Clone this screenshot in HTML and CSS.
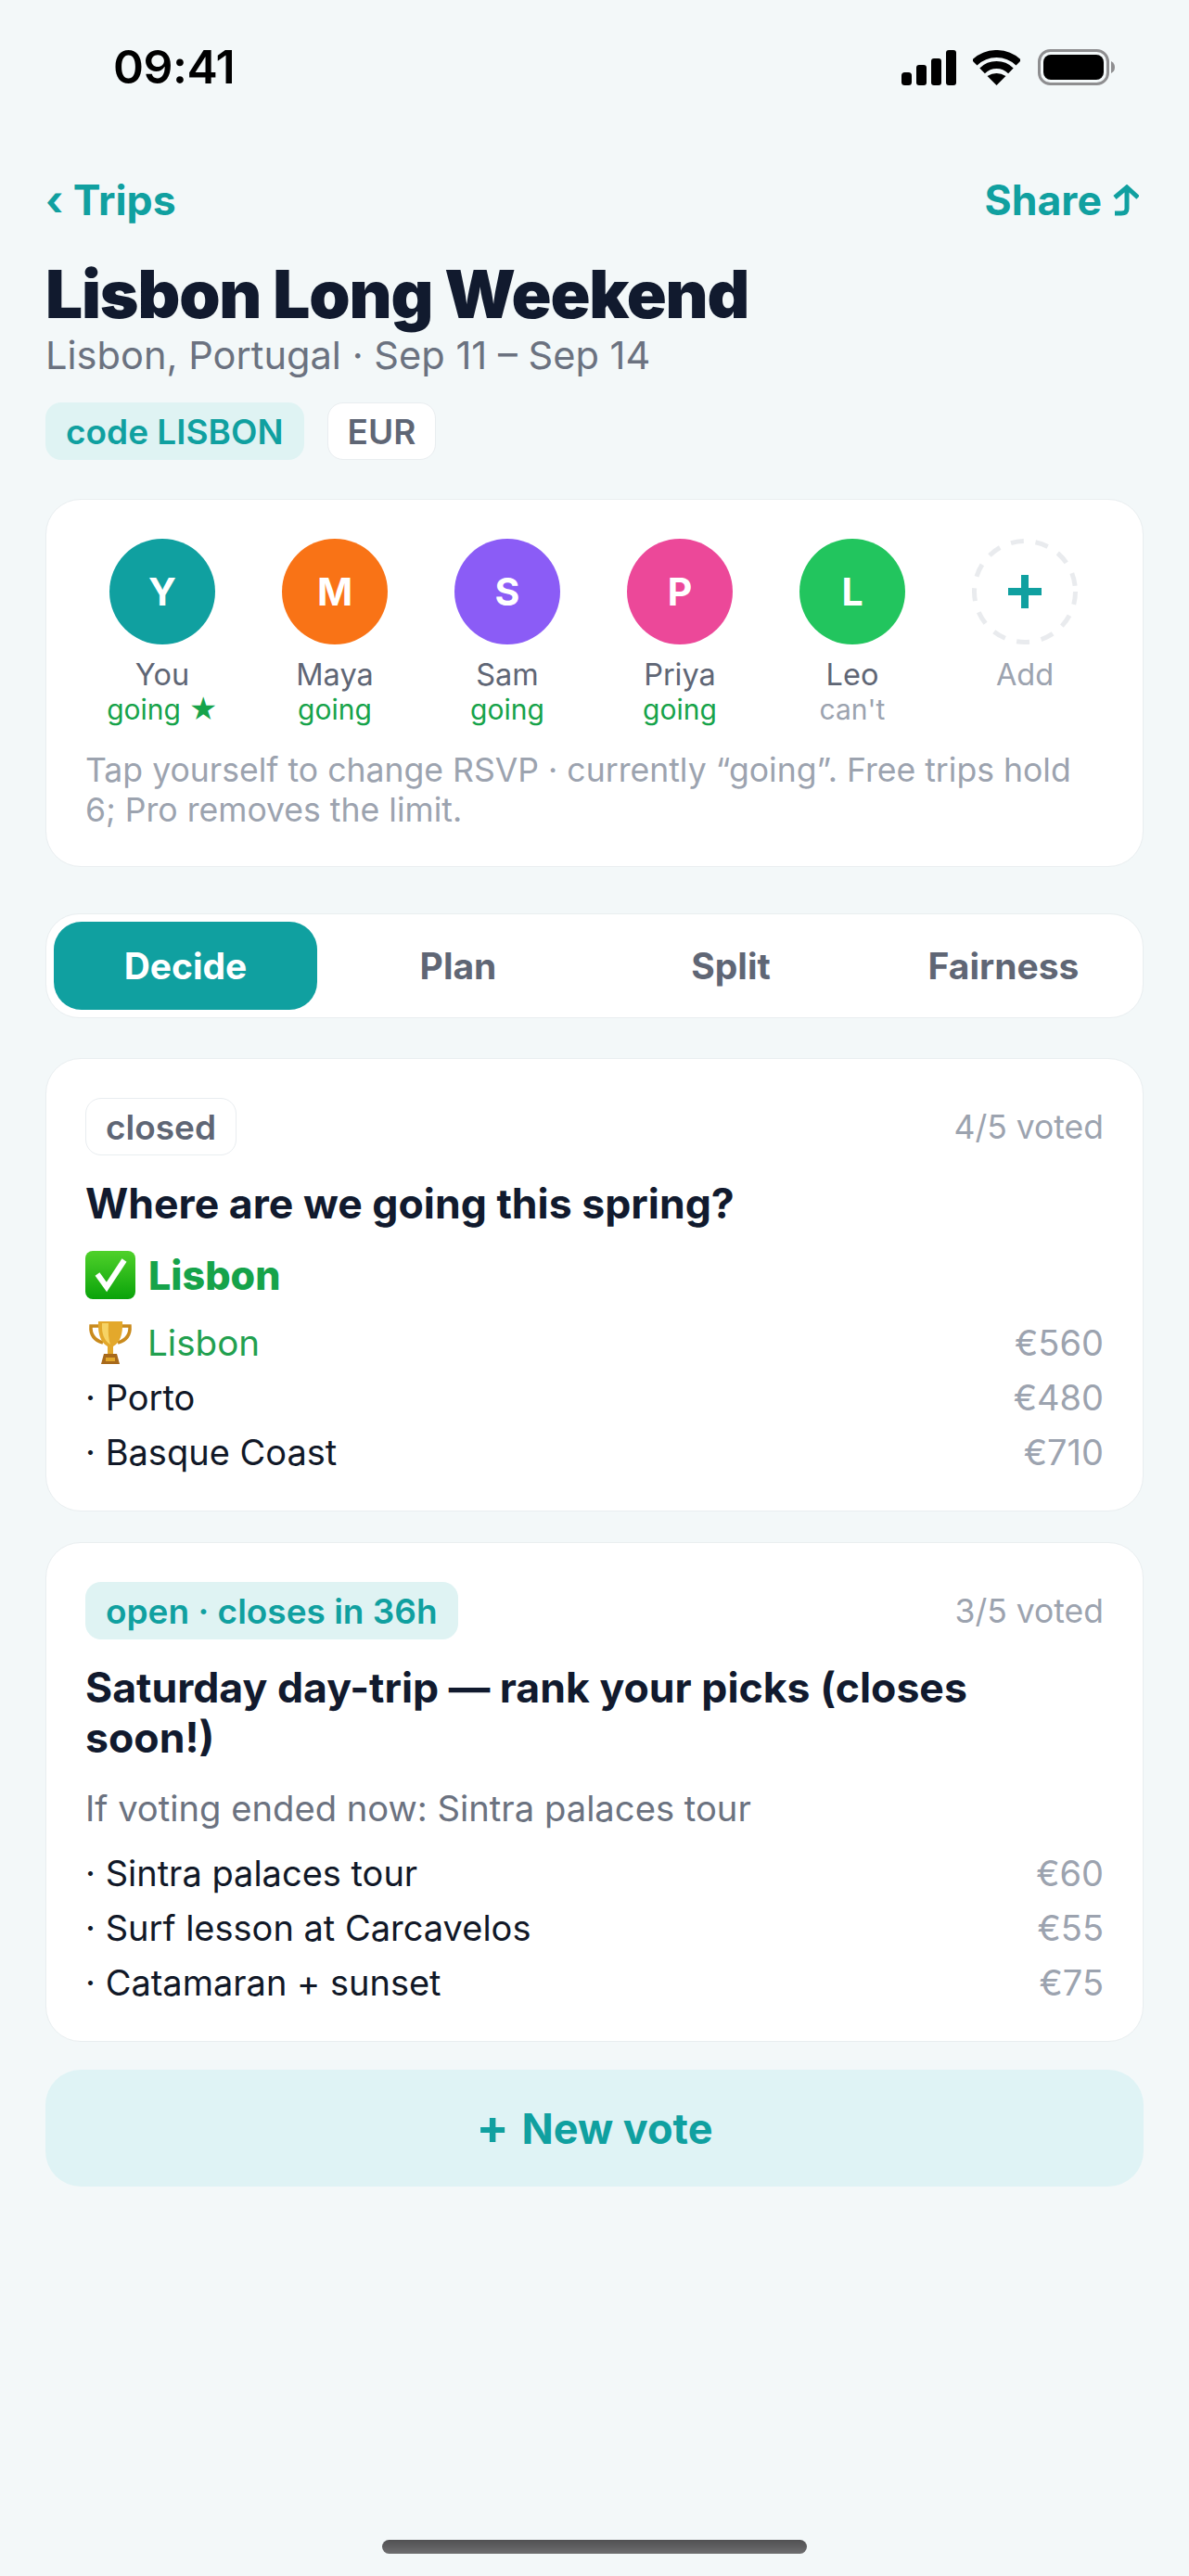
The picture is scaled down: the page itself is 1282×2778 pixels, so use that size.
FILE: index.html
```html
<!DOCTYPE html>
<html lang="en">

<head>
  <meta charset="UTF-8">
  <title>Lisbon Long Weekend</title>
  <link rel="stylesheet" href="styles.css">
</head>

<body>
  <div class="status-bar">
    <span class="time">09:41</span>
    <div class="status-icons">
      <svg class="signal" viewBox="0 0 59 38" width="59" height="38">
        <rect x="0" y="24" width="11" height="14" rx="3.5" />
        <rect x="16" y="16" width="11" height="22" rx="3" />
        <rect x="32" y="9" width="11" height="29" rx="3" />
        <rect x="48" y="0" width="11" height="38" rx="3" />
      </svg>
      <svg class="wifi" viewBox="0 0 51 38" width="51" height="38">
        <path d="M1.7 13.7 A34 34 0 0 1 49.3 13.7" fill="none" stroke="#000" stroke-width="8" />
        <path d="M10.1 22.3 A22 22 0 0 1 40.9 22.3" fill="none" stroke="#000" stroke-width="8" />
        <path d="M25.5 38 L15.5 28 Q25.5 22 35.5 28 Z" />
      </svg>
      <svg class="battery" viewBox="0 0 83 39" width="83" height="39">
        <rect x="1.5" y="1.5" width="74" height="36" rx="12" fill="none" stroke="#8e8e90" stroke-width="3" />
        <rect x="6" y="6" width="65" height="27" rx="8" />
        <path d="M79 13 Q83 15 83 19.5 Q83 24 79 26 Z" fill="#8e8e90" />
      </svg>
    </div>
  </div>

  <div class="nav">
    <span>‹ Trips</span>
    <span class="share">Share
      <svg viewBox="0 0 28 34" width="28" height="34">
        <path d="M2 14 L15 3 L27 14 M15 3 V26 Q15 31 9 31 H2" fill="none" stroke="#10a0a0" stroke-width="5" />
      </svg>
    </span>
  </div>

  <h1>Lisbon Long Weekend</h1>
  <p class="subtitle">Lisbon, Portugal · Sep 11 – Sep 14</p>
  <div class="tags">
    <span class="tag tag-teal">code LISBON</span>
    <span class="tag tag-plain">EUR</span>
  </div>

  <div class="card people">
    <div class="people-row">
      <div class="person">
        <div class="avatar teal">Y</div>
        <div class="name">You</div>
        <div class="rsvp">going ★</div>
      </div>
      <div class="person">
        <div class="avatar orange">M</div>
        <div class="name">Maya</div>
        <div class="rsvp">going</div>
      </div>
      <div class="person">
        <div class="avatar purple">S</div>
        <div class="name">Sam</div>
        <div class="rsvp">going</div>
      </div>
      <div class="person">
        <div class="avatar pink">P</div>
        <div class="name">Priya</div>
        <div class="rsvp">going</div>
      </div>
      <div class="person">
        <div class="avatar green">L</div>
        <div class="name">Leo</div>
        <div class="rsvp cant">can't</div>
      </div>
      <div class="person">
        <svg class="avatar-add" viewBox="0 0 114 114" width="114" height="114">
          <circle cx="57" cy="57" r="54.5" fill="none" stroke="#e9ebee" stroke-width="5" stroke-dasharray="14 12.8" />
          <path d="M57 39 V75 M39 57 H75" stroke="#10a0a0" stroke-width="8" />
        </svg>
        <div class="name name-add">Add</div>
      </div>
    </div>
    <p class="hint">Tap yourself to change RSVP · currently “going”. Free trips hold 6; Pro removes the limit.</p>
  </div>

  <div class="tabs">
    <div class="tab active">Decide</div>
    <div class="tab">Plan</div>
    <div class="tab">Split</div>
    <div class="tab">Fairness</div>
  </div>

  <div class="card vote vote-closed">
    <div class="vote-head">
      <span class="tag tag-plain">closed</span>
      <span class="voted">4/5 voted</span>
    </div>
    <h3>Where are we going this spring?</h3>
    <div class="winner">
      <svg viewBox="0 0 54 52" width="54" height="52">
        <defs>
          <linearGradient id="checkbox" x1="0" y1="0" x2="0" y2="1">
            <stop offset="0" stop-color="#4fd12a" />
            <stop offset="1" stop-color="#0aa30a" />
          </linearGradient>
        </defs>
        <rect width="54" height="52" rx="8" fill="url(#checkbox)" />
        <path d="M13 25 L23 39 L42 10" fill="none" stroke="#fff" stroke-width="6" />
      </svg>
      <span>Lisbon</span>
    </div>
    <div class="options">
      <div class="option leader">
        <span class="option-name">
          <svg class="trophy" viewBox="0 0 48 48" width="48" height="48">
            <path d="M13 6 H3 Q2 20 16 24 M35 6 H45 Q46 20 32 24" fill="none" stroke="#c98a1c" stroke-width="3.5" />
            <path d="M11 1 H37 Q38 22 27 28 V36 H21 V28 Q10 22 11 1 Z" fill="#e3a82b" />
            <path d="M15 3 H22 Q21 18 24 26 Q14 20 15 3 Z" fill="#f6d365" />
            <path d="M17 36 H31 L34 47 H14 Z" fill="#a8691a" />
            <rect x="19" y="40" width="10" height="4" fill="#e3a82b" />
          </svg>
          Lisbon
        </span>
        <span class="price">€560</span>
      </div>
      <div class="option"><span class="option-name">· Porto</span><span class="price">€480</span></div>
      <div class="option"><span class="option-name">· Basque Coast</span><span class="price">€710</span></div>
    </div>
  </div>

  <div class="card vote vote-open">
    <div class="vote-head">
      <span class="tag tag-teal">open · closes in 36h</span>
      <span class="voted">3/5 voted</span>
    </div>
    <h3>Saturday day-trip — rank your picks (closes soon!)</h3>
    <p class="vote-note">If voting ended now: Sintra palaces tour</p>
    <div class="options">
      <div class="option"><span class="option-name">· Sintra palaces tour</span><span class="price">€60</span></div>
      <div class="option"><span class="option-name">· Surf lesson at Carcavelos</span><span class="price">€55</span></div>
      <div class="option"><span class="option-name">· Catamaran + sunset</span><span class="price">€75</span></div>
    </div>
  </div>

  <button class="new-vote"><span class="plus">+</span> New vote</button>

  <div class="home-bar"></div>
</body>

</html>
```

FILE: styles.css
```css
* {
  box-sizing: border-box;
}

html,
body {
  height: 2778px;
}

body {
  font-family: Inter, "Noto Sans", sans-serif;
  margin: 0;
  padding: 0 49px;
  background-color: #f3f8f9;
  color: #111827;
  display: flex;
  flex-direction: column;
  overflow: hidden;
}

.status-bar {
  display: flex;
  justify-content: space-between;
  align-items: center;
  height: 39px;
  margin: 53px 0 0;
  padding: 0 31px 0 73px;
  color: #000;
}

.time {
  font-size: 50px;
  font-weight: 600;
  line-height: 39px;
  letter-spacing: -0.5px;
}

.status-icons {
  display: flex;
  align-items: center;
  gap: 18px;
}

.status-icons svg {
  display: block;
}

.wifi {
  margin-right: 1px;
}

.nav {
  display: flex;
  justify-content: space-between;
  margin-top: 97px;
  height: 54px;
  line-height: 54px;
  font-size: 44.6px;
  font-weight: 700;
  color: #10a0a0;
}

.share {
  display: flex;
  align-items: center;
  gap: 12px;
  margin-right: 5px;
}

h1 {
  margin: 36px 0 0;
  font-size: 71px;
  font-weight: 900;
  line-height: 76px;
  letter-spacing: -1.15px;
  color: #111a2e;
}

.subtitle {
  margin: 3px 0 0;
  font-size: 41.6px;
  line-height: 50px;
  color: #6b7280;
}

.tags {
  display: flex;
  gap: 25px;
  margin-top: 26px;
}

.tag {
  display: inline-flex;
  align-items: center;
  height: 62px;
  padding: 0 22px;
  border-radius: 17px;
  font-size: 37px;
  font-weight: 600;
}

.tag-teal {
  background-color: #dff3f3;
  color: #10a0a0;
}

.tag-plain {
  padding: 0 21px;
  background-color: #fff;
  border: 1px solid #e9edf0;
  color: #5f6675;
}

.card {
  background-color: #fff;
  border: 1px solid #e9eef0;
  border-radius: 38px;
}

.people {
  margin-top: 42px;
  padding: 42px 42px 39px;
}

.people-row {
  display: grid;
  grid-template-columns: repeat(6, 186px);
  margin: 0 -10px;
}

.person {
  display: flex;
  flex-direction: column;
  align-items: center;
}

.avatar {
  display: flex;
  justify-content: center;
  align-items: center;
  width: 114px;
  height: 114px;
  border-radius: 50%;
  color: #fff;
  font-size: 41px;
  font-weight: 700;
}

.avatar-add {
  display: block;
}

.teal {
  background-color: #10a0a0;
}

.orange {
  background-color: #f97316;
}

.purple {
  background-color: #8b5cf6;
}

.pink {
  background-color: #ec4899;
}

.green {
  background-color: #22c55e;
}

.name {
  margin-top: 13px;
  font-size: 32.5px;
  line-height: 40px;
  color: #5f6675;
}

.name-add {
  color: #9ca3af;
}

.rsvp {
  margin-top: -1px;
  font-size: 30px;
  line-height: 37px;
  color: #16a34a;
}

.cant {
  color: #9ca3af;
}

.hint {
  margin: 25px 0 0;
  font-size: 35.6px;
  line-height: 43px;
  color: #9ca3af;
}

.tabs {
  display: grid;
  grid-template-columns: repeat(4, 1fr);
  gap: 10px;
  margin-top: 50px;
  padding: 8px;
  background-color: #fff;
  border: 1px solid #e9eef0;
  border-radius: 36px;
}

.tab {
  height: 95px;
  line-height: 95px;
  border-radius: 30px;
  text-align: center;
  font-size: 39px;
  font-weight: 700;
  color: #5f6675;
}

.tab.active {
  background-color: #10a0a0;
  color: #fff;
}

.vote {
  padding: 42px 42px 34px;
}

.vote-closed {
  margin-top: 43px;
}

.vote-open {
  margin-top: 33px;
}

.vote-head {
  display: flex;
  justify-content: space-between;
  align-items: center;
}

.voted {
  font-size: 35.5px;
  color: #9ca3af;
}

h3 {
  margin: 25px 30px 0 0;
  font-size: 44.6px;
  font-weight: 700;
  line-height: 54px;
  color: #111a2e;
}

.winner {
  display: flex;
  align-items: center;
  gap: 14px;
  height: 54px;
  margin-top: 23px;
  font-size: 43px;
  font-weight: 800;
  color: #16a34a;
}

.vote-note {
  margin: 25px 0 0;
  font-size: 38.2px;
  line-height: 48px;
  color: #6b7280;
}

.options {
  margin-top: 16px;
}

.option {
  display: flex;
  justify-content: space-between;
  align-items: center;
  height: 59px;
  font-size: 38px;
}

.option-name {
  display: flex;
  align-items: center;
  gap: 16px;
}

.leader .option-name {
  font-size: 38.6px;
}

.trophy {
  margin-left: 3px;
}

.leader {
  color: #22a04f;
}

.price {
  color: #9ca3af;
}

.new-vote {
  height: 126px;
  margin-top: 30px;
  border: none;
  border-radius: 38px;
  background-color: #dff3f5;
  color: #10a0a0;
  font-family: inherit;
  font-size: 45px;
  font-weight: 700;
}

.plus {
  margin-right: 3px;
  font-size: 52px;
  line-height: 1;
}

.home-bar {
  width: 458px;
  height: 15px;
  margin: auto 0 24px 363px;
  border-radius: 8px;
  background: linear-gradient(#505052, #6e6e70);
}
```
